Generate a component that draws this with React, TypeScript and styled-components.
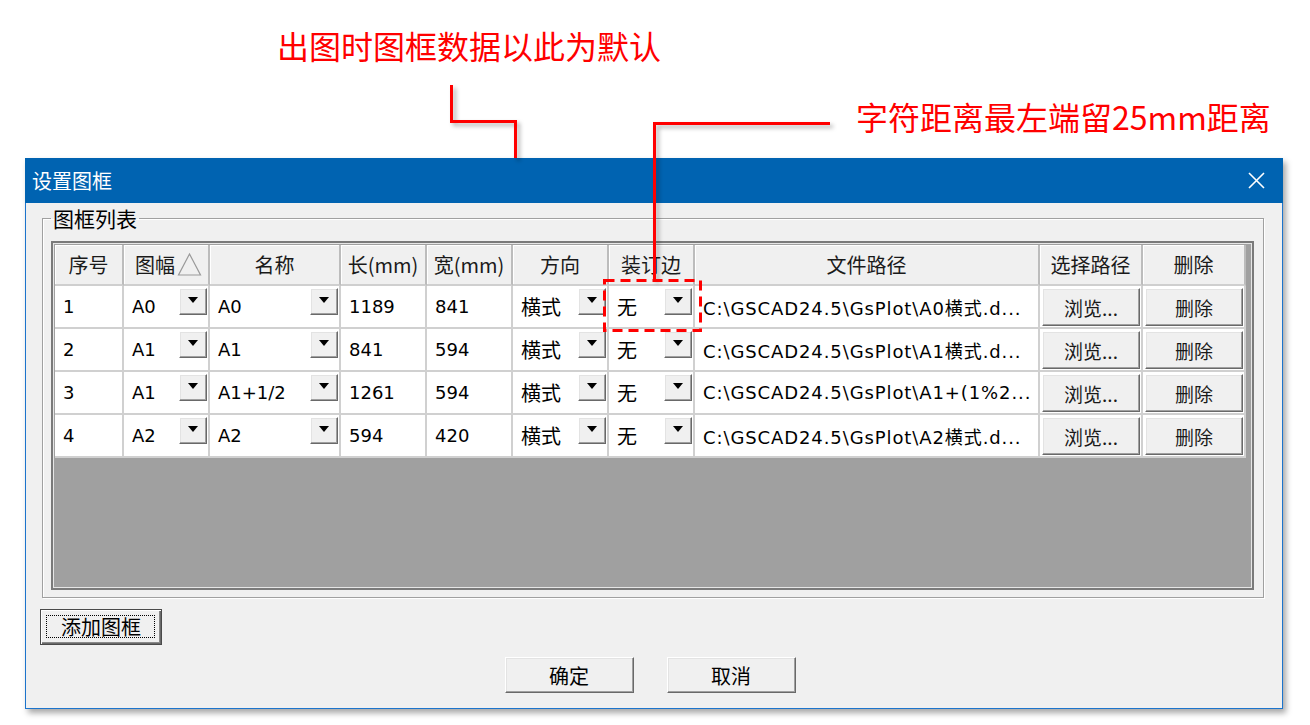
import React from "react";
import styled, { createGlobalStyle } from "styled-components";

const CJK = `"Noto Sans CJK SC", "Noto Sans", sans-serif`;
const DATA = `"DejaVu Sans", "Noto Sans CJK SC", sans-serif`;

const GlobalStyle = createGlobalStyle`
  html, body {
    margin: 0;
    padding: 0;
    background: #ffffff;
  }
  body {
    font-family: ${CJK};
  }
`;

const Page = styled.div`
  position: relative;
  width: 1310px;
  height: 725px;
  box-sizing: border-box;
  padding: 158px 0 0 25px;
  overflow: hidden;
`;

const Dialog = styled.div`
  width: 1258px;
  height: 551px;
  box-sizing: border-box;
  display: flex;
  flex-direction: column;
  background: #f0f0f0;
  border: 1px solid #1c74cc;
  border-top: 0;
  box-shadow: 3px 4px 6px rgba(0, 0, 0, 0.35);
`;

const TitleBar = styled.div`
  height: 45px;
  flex: none;
  display: flex;
  align-items: center;
  justify-content: space-between;
  padding: 0 18px 0 7px;
  background: #0063b1;
  color: #ffffff;
  font-size: 20px;
  margin: 0 -1px;
`;

const Body = styled.div`
  display: flex;
  flex-direction: column;
  padding: 3px 0 0 14px;
`;

const GroupBox = styled.fieldset`
  width: 1222px;
  box-sizing: border-box;
  margin: 0 0 0 2px;
  padding: 0 9px 7px 8px;
  border: 1px solid #a0a0a0;
  box-shadow: inset 1px 1px 0 #ffffff, 1px 1px 0 #ffffff;
  min-inline-size: 0;
`;

const Legend = styled.legend`
  padding: 0 2px;
  font-size: 21px;
  line-height: 24px;
  color: #000;
`;

const Frame = styled.div`
  margin-top: 11px;
  height: 349px;
  box-sizing: border-box;
  padding: 2px;
  border: 2px solid #7a7a7a;
  background: #a0a0a0;
  box-shadow: inset 0 0 0 1px #e6e6e6;
`;

const COLUMNS = "69px 86px 131px 86px 86px 96px 86px 345px 103px 103px";

const Row = styled.div`
  display: grid;
  grid-template-columns: ${COLUMNS};
  width: 1191px;
`;

const HeaderCell = styled.div<{ $align?: "left" | "center" }>`
  height: 41px;
  box-sizing: border-box;
  display: flex;
  align-items: center;
  justify-content: ${(p) => (p.$align === "left" ? "flex-start" : "center")};
  padding-left: ${(p) => (p.$align === "left" ? "11px" : "0")};
  background: #f0f0f0;
  border-right: 2px solid #bcbcbc;
  border-bottom: 2px solid #cfcfcf;
  box-shadow: inset 1px 1px 0 #ffffff;
  font-family: ${CJK};
  font-size: 20px;
  color: #1a1a1a;
  white-space: nowrap;
`;

const Cell = styled.div<{ $pad?: boolean; $spaced?: boolean }>`
  height: 43px;
  box-sizing: border-box;
  display: flex;
  align-items: center;
  justify-content: space-between;
  padding: ${(p) => (p.$pad ? "2px 1px 1px 2px" : "0 1px 0 8px")};
  background: #ffffff;
  border-right: 2px solid #d0d0d0;
  border-bottom: 2px solid #d0d0d0;
  font-family: ${DATA};
  font-size: 18px;
  letter-spacing: ${(p) => (p.$spaced ? "0.9px" : "0")};
  color: #000;
  white-space: nowrap;
  overflow: hidden;
`;

const CellText = styled.span<{ $cjk?: boolean }>`
  font-family: ${(p) => (p.$cjk ? CJK : DATA)};
  font-size: ${(p) => (p.$cjk ? "20px" : "18px")};
`;

const raised = `
  background: #f0f0f0;
  border: 1px solid;
  border-color: #ffffff #696969 #696969 #ffffff;
  box-shadow: inset -1px -1px 0 #a0a0a0, inset 1px 1px 0 #e3e3e3;
`;

const DropButton = styled.span`
  align-self: flex-start;
  margin-top: 2px;
  width: 28px;
  height: 27px;
  flex: none;
  box-sizing: border-box;
  display: flex;
  justify-content: center;
  padding-top: 8px;
  ${raised}

  &::before {
    content: "";
    width: 0;
    height: 0;
    border-left: 5px solid transparent;
    border-right: 5px solid transparent;
    border-top: 6px solid #000;
  }
`;

const CellButton = styled.button`
  width: 100%;
  height: 100%;
  box-sizing: border-box;
  ${raised}
  font-family: ${CJK};
  font-size: 19px;
  color: #1a1a1a;
  padding: 0;
`;

const AddButton = styled.button`
  position: relative;
  align-self: flex-start;
  margin-top: 11px;
  width: 122px;
  height: 36px;
  box-sizing: border-box;
  padding: 0 0 2px;
  background: #f0f0f0;
  border: 1px solid #4a4a4a;
  box-shadow: inset 1px 1px 0 #ffffff, inset -1px -1px 0 #696969,
    inset -2px -2px 0 #8a8a8a;
  font-family: ${CJK};
  font-size: 20px;
  color: #000;

  &::after {
    content: "";
    position: absolute;
    inset: 5px 6px 6px 5px;
    border: 1px dotted #000;
  }
`;

const Footer = styled.div`
  display: flex;
  justify-content: center;
  gap: 33px;
  margin-top: 12px;
  padding-right: 22px;
`;

const PushButton = styled.button`
  width: 129px;
  height: 36px;
  box-sizing: border-box;
  ${raised}
  font-family: ${CJK};
  font-size: 20px;
  color: #000;
  padding: 0;
`;

const Callout = styled.div<{ $left: number; $top: number }>`
  position: absolute;
  left: ${(p) => p.$left}px;
  top: ${(p) => p.$top}px;
  font-family: ${CJK};
  font-size: 32px;
  line-height: 1;
  color: #ff0000;
  white-space: nowrap;
  z-index: 11;
`;

const Overlay = styled.svg`
  position: absolute;
  left: 0;
  top: 0;
  width: 1310px;
  height: 725px;
  pointer-events: none;
  z-index: 10;
`;

const CloseIcon = () => (
  <svg width="17" height="17" viewBox="0 0 17 17">
    <path d="M1 1 L16 16 M16 1 L1 16" stroke="#ffffff" strokeWidth="1.6" />
  </svg>
);

const SortIcon = () => (
  <svg width="25" height="25" viewBox="0 0 25 25" style={{ marginLeft: 2 }}>
    <polygon points="12.5,2 23.5,23 1.5,23" fill="none" stroke="#9a9a9a" strokeWidth="1.2" />
  </svg>
);

type FrameRow = {
  no: string;
  size: string;
  name: string;
  length: string;
  width: string;
  dir: string;
  binding: string;
  path: string;
};

const ROWS: FrameRow[] = [
  { no: "1", size: "A0", name: "A0", length: "1189", width: "841", dir: "横式", binding: "无", path: "C:\\GSCAD24.5\\GsPlot\\A0横式.d..." },
  { no: "2", size: "A1", name: "A1", length: "841", width: "594", dir: "横式", binding: "无", path: "C:\\GSCAD24.5\\GsPlot\\A1横式.d..." },
  { no: "3", size: "A1", name: "A1+1/2", length: "1261", width: "594", dir: "横式", binding: "无", path: "C:\\GSCAD24.5\\GsPlot\\A1+(1%2..." },
  { no: "4", size: "A2", name: "A2", length: "594", width: "420", dir: "横式", binding: "无", path: "C:\\GSCAD24.5\\GsPlot\\A2横式.d..." },
];

const ComboCell = ({ value, cjk }: { value: string; cjk?: boolean }) => (
  <Cell>
    <CellText $cjk={cjk}>{value}</CellText>
    <DropButton />
  </Cell>
);

const App = () => {
  return (
    <Page>
      <GlobalStyle />
      <Dialog>
        <TitleBar>
          <span>设置图框</span>
          <CloseIcon />
        </TitleBar>
        <Body>
          <GroupBox>
            <Legend>图框列表</Legend>
            <Frame>
              <Row>
                <HeaderCell>序号</HeaderCell>
                <HeaderCell $align="left">
                  图幅
                  <SortIcon />
                </HeaderCell>
                <HeaderCell>名称</HeaderCell>
                <HeaderCell>长(mm)</HeaderCell>
                <HeaderCell>宽(mm)</HeaderCell>
                <HeaderCell>方向</HeaderCell>
                <HeaderCell>装订边</HeaderCell>
                <HeaderCell>文件路径</HeaderCell>
                <HeaderCell>选择路径</HeaderCell>
                <HeaderCell>删除</HeaderCell>
              </Row>
              {ROWS.map((r) => (
                <Row key={r.no}>
                  <Cell>{r.no}</Cell>
                  <ComboCell value={r.size} />
                  <ComboCell value={r.name} />
                  <Cell>{r.length}</Cell>
                  <Cell>{r.width}</Cell>
                  <ComboCell value={r.dir} cjk />
                  <ComboCell value={r.binding} cjk />
                  <Cell $spaced>{r.path}</Cell>
                  <Cell $pad>
                    <CellButton type="button">浏览...</CellButton>
                  </Cell>
                  <Cell $pad>
                    <CellButton type="button">删除</CellButton>
                  </Cell>
                </Row>
              ))}
            </Frame>
          </GroupBox>
          <AddButton type="button">添加图框</AddButton>
          <Footer>
            <PushButton type="button">确定</PushButton>
            <PushButton type="button">取消</PushButton>
          </Footer>
        </Body>
      </Dialog>

      <Callout $left={277} $top={29}>
        出图时图框数据以此为默认
      </Callout>
      <Callout $left={856} $top={100}>
        字符距离最左端留25mm距离
      </Callout>
      <Overlay viewBox="0 0 1310 725">
        <defs>
          <filter id="shade" x="-20%" y="-20%" width="140%" height="140%">
            <feDropShadow dx="3" dy="3" stdDeviation="2" floodColor="#000" floodOpacity="0.3" />
          </filter>
        </defs>
        <g filter="url(#shade)" fill="none" stroke="#ff0000" strokeWidth="3">
          <polyline points="451.5,85 451.5,121.5 515.5,121.5 515.5,158" />
          <polyline points="830,123.5 654.5,123.5 654.5,280" />
        </g>
        <rect
          x="604.5"
          y="280.5"
          width="96"
          height="50"
          fill="none"
          stroke="#ff0000"
          strokeWidth="3"
          strokeDasharray="10 6"
        />
      </Overlay>
    </Page>
  );
};

export default App;
